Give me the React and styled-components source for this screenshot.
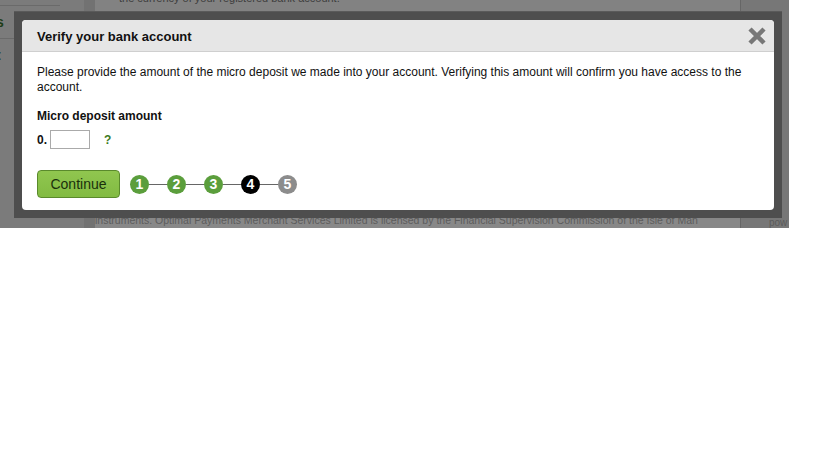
import React from "react";
import styled, { createGlobalStyle } from "styled-components";

const Global = createGlobalStyle`
  html, body { margin: 0; padding: 0; background: #fff; }
  body { font-family: "Liberation Sans", Arial, sans-serif; }
`;

const Screen = styled.div`
  position: relative;
  width: 789px;
  height: 228px;
  overflow: hidden;
  background: #7e7e7e;
`;

const BgPage = styled.div`
  display: grid;
  grid-template-columns: 84px 1fr 49px;
  height: 100%;
`;

const Sidebar = styled.div`
  background: #7b7b7b;
  display: flex;
  flex-direction: column;
  padding-top: 5px;
  overflow: hidden;
`;

const SideItem = styled.div`
  height: 32px;
  border-top: 1px solid #6a6a6a;
  width: 60px;
  font-size: 14px;
  font-weight: bold;
  color: #1f3d16;
  line-height: 32px;
  text-indent: -4px;
`;

const Main = styled.div`
  border-left: 11px solid #727272;
  display: flex;
  flex-direction: column;
  justify-content: space-between;
  background: #828282;
`;

const TopText = styled.div`
  margin-top: -8px;
  padding-left: 24px;
  font-size: 11px;
  color: #3d3d3d;
`;

const Footer = styled.div`
  font-size: 10.5px;
  color: #5c5c5c;
  height: 14px;
  line-height: 12px;
  background: #888;
  white-space: nowrap;
`;

const RightCol = styled.div`
  background: #777;
  border-left: 1px solid #666;
  display: flex;
  flex-direction: column;
  justify-content: flex-end;
  font-size: 10px;
  color: #5a5a5a;
  padding-left: 28px;
`;

const Logo = styled.div`
  height: 40px;
  border-left: 3px solid #a08030;
`;

const Frame = styled.div`
  position: absolute;
  left: 14px;
  top: 11px;
  width: 768px;
  height: 207px;
  box-sizing: border-box;
  padding: 8px;
  background: #4e4e4e;
  border-top: 1px solid #5a5a5a;
`;

const Dialog = styled.div`
  background: #fff;
  border-radius: 4px;
  height: 100%;
  overflow: hidden;
  display: flex;
  flex-direction: column;
`;

const Header = styled.div`
  height: 32px;
  background: #e6e6e6;
  border-bottom: 1px solid #cfcfcf;
  display: flex;
  align-items: center;
  justify-content: space-between;
  padding: 0 7px 0 15px;
  box-sizing: border-box;
`;

const Title = styled.h2`
  margin: 2px 0 0 0;
  font-size: 13px;
  font-weight: bold;
  color: #111;
`;

const Close = styled.button`
  border: 0;
  background: transparent;
  padding: 0;
  width: 20px;
  height: 20px;
  cursor: pointer;
  display: flex;
  margin-top: 1px;
`;

const Body = styled.div`
  padding: 13px 15px 0 15px;
  font-size: 12px;
  color: #111;
`;

const Para = styled.p`
  margin: 0;
  line-height: 15px;
`;

const Label = styled.div`
  margin-top: 14px;
  font-weight: bold;
  line-height: 15px;
`;

const AmountRow = styled.div`
  display: flex;
  align-items: center;
  margin-top: 6px;
  font-weight: bold;
`;

const Amount = styled.input`
  width: 40px;
  height: 19px;
  box-sizing: border-box;
  border: 1px solid #aaa;
  margin-left: 3px;
  padding: 0 2px;
`;

const Help = styled.span`
  color: #3d7a1e;
  margin-left: 14px;
`;

const ActionRow = styled.div`
  display: flex;
  align-items: center;
  margin-top: 21px;
`;

const Continue = styled.button`
  width: 83px;
  height: 28px;
  box-sizing: border-box;
  background: linear-gradient(#90c64f, #82bb42);
  border: 1px solid #5a8a2c;
  border-radius: 4px;
  font-family: "Liberation Sans", Arial, sans-serif;
  font-size: 14px;
  color: #1a300c;
  padding: 0;
`;

const Steps = styled.div`
  display: flex;
  align-items: center;
  margin-left: 10px;
`;

const Connector = styled.span`
  width: 18px;
  height: 1px;
  background: #666;
`;

const Step = styled.span`
  width: 19px;
  height: 19px;
  border-radius: 50%;
  background: ${(p) => (p.$state === "done" ? "#5b9e3c" : p.$state === "current" ? "#000" : "#8c8c8c")};
  color: #fff;
  font-weight: bold;
  font-size: 14px;
  display: flex;
  align-items: center;
  justify-content: center;
`;

const steps = [
  { n: 1, s: "done" },
  { n: 2, s: "done" },
  { n: 3, s: "done" },
  { n: 4, s: "current" },
  { n: 5, s: "todo" },
];

export default function App() {
  return (
    <>
      <Global />
      <Screen>
        <BgPage>
          <Sidebar>
            <SideItem>s</SideItem>
            <SideItem>t</SideItem>
          </Sidebar>
          <Main>
            <TopText>the currency of your registered bank account.</TopText>
            <Footer>
              instruments. Optimal Payments Merchant Services Limited is licensed by the Financial Supervision Commission of the Isle of Man
            </Footer>
          </Main>
          <RightCol>
            <Logo />
            <div>pow</div>
          </RightCol>
        </BgPage>
        <Frame>
          <Dialog>
            <Header>
              <Title>Verify your bank account</Title>
              <Close aria-label="Close">
                <svg width="20" height="20" viewBox="0 0 20 20">
                  <path d="M3 3 L17 17 M17 3 L3 17" stroke="#777" strokeWidth="4.5" />
                </svg>
              </Close>
            </Header>
            <Body>
              <Para>
                Please provide the amount of the micro deposit we made into your account. Verifying this amount will confirm you have access to the account.
              </Para>
              <Label>Micro deposit amount</Label>
              <AmountRow>
                0.<Amount type="text" />
                <Help>?</Help>
              </AmountRow>
              <ActionRow>
                <Continue>Continue</Continue>
                <Steps>
                  {steps.map((st, i) => (
                    <React.Fragment key={st.n}>
                      {i > 0 && <Connector />}
                      <Step $state={st.s}>{st.n}</Step>
                    </React.Fragment>
                  ))}
                </Steps>
              </ActionRow>
            </Body>
          </Dialog>
        </Frame>
      </Screen>
    </>
  );
}
